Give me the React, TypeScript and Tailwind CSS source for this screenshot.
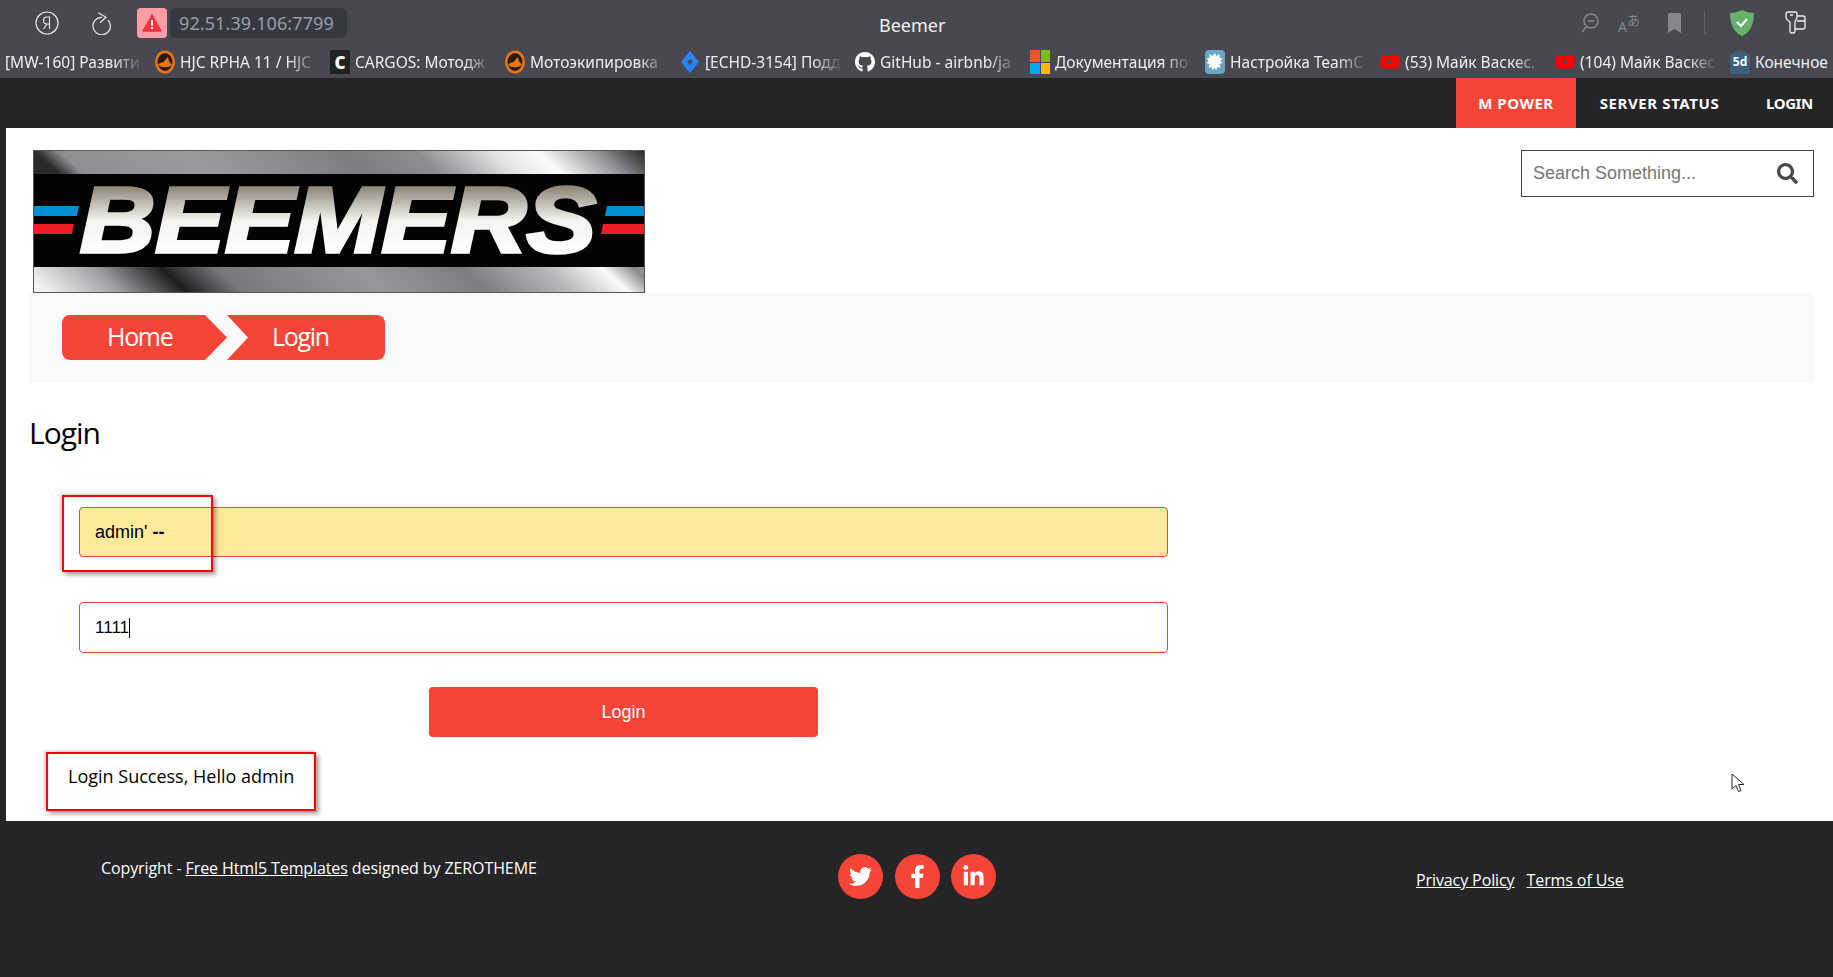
import React from 'react';
import { FaFacebookF, FaGithub, FaLinkedinIn, FaSearch, FaTwitter, FaYoutube } from 'react-icons/fa';

const chromeFont = { fontFamily: '"Noto Sans", sans-serif' };

const Moto = () => (
  <svg width="20" height="24" viewBox="0 0 20 24">
    <ellipse cx="10" cy="12" rx="10" ry="11.500" fill="#e8750f" />
    <ellipse cx="10" cy="12" rx="7.500" ry="9" fill="#2b1a0c" />
    <path d="M3 15c3-4 5-1 7-5l3-3 1 4 3 4c-4 3-10 3-14 0z" fill="#e8750f" />
  </svg>
);

const Cargos = () => (
  <div className="w-5 h-6 bg-[#222] flex items-center justify-center text-white font-black text-[17px] leading-none">C</div>
);

const Jira = () => (
  <svg width="20" height="24" viewBox="0 0 20 24">
    <path d="M10 1l9 11-9 11-9-11z" fill="#2684ff" />
    <path d="M10 9l3 3-3 3-3-3z" fill="#484851" />
  </svg>
);

const Windows = () => (
  <div className="w-5 h-6 grid grid-cols-2 gap-[1px]">
    <div className="bg-[#f35325]" />
    <div className="bg-[#81bc06]" />
    <div className="bg-[#05a6f0]" />
    <div className="bg-[#ffba08]" />
  </div>
);

const TeamCity = () => (
  <div className="w-5 h-6 rounded-sm bg-[#6aa5c5] flex items-center justify-center">
    <svg width="16" height="18" viewBox="0 0 16 18">
      <path d="M8 0l1.500 3 3-2 0 4 3 0-2 3 2 2-3 1 1 4-3-1-1 3-2-2-2 2-1-3-3 1 1-4-3-1 2-2-2-3 3 0 0-4 3 2z" fill="#fff" />
    </svg>
  </div>
);

const Yt = () => <FaYoutube size={22} className="text-[#f00]" />;

const FiveD = () => (
  <div className="w-5 h-6 bg-[#3b5f7d] flex items-center justify-center text-white text-[12px] font-bold leading-none [clip-path:polygon(50%_0,100%_20%,100%_100%,0_100%,0_20%)]">5d</div>
);

const bookmarks: { icon: React.ReactNode; label: string }[] = [
  { icon: <Moto />, label: 'HJC RPHA 11 / HJC' },
  { icon: <Cargos />, label: 'CARGOS: Мотодж' },
  { icon: <Moto />, label: 'Мотоэкипировка' },
  { icon: <Jira />, label: '[ECHD-3154] Подд' },
  { icon: <FaGithub size={22} className="text-white" />, label: 'GitHub - airbnb/ja' },
  { icon: <Windows />, label: 'Документация по' },
  { icon: <TeamCity />, label: 'Настройка TeamC' },
  { icon: <Yt />, label: '(53) Майк Васкес.' },
  { icon: <Yt />, label: '(104) Майк Васкес' },
  { icon: <FiveD />, label: 'Конечное' },
];

const Fade = ({ children }: { children: React.ReactNode }) => (
  <div className="w-[135px] overflow-hidden [mask-image:linear-gradient(to_right,#000_80%,transparent_102%)]">{children}</div>
);

const BrowserChrome = () => (
  <div className="h-[78px] bg-[#484851] text-white overflow-hidden" style={chromeFont}>
    <div className="h-[46px] flex items-center relative">
      <div className="w-[35px] shrink-0" />
      <svg width="24" height="24" viewBox="0 0 24 24" fill="none" stroke="#e8e8ea" strokeWidth="1.200">
        <circle cx="12" cy="12" r="11" />
        <path d="M14.500 18V6h-2.500a3.300 3.300 0 0 0 0 7h2.500M12 13l-3.500 5" />
      </svg>
      <svg className="ml-[33px]" width="20" height="24" viewBox="0 0 20 24" fill="none" stroke="#e8e8ea" strokeWidth="1.200">
        <path d="M10 6.300A8.700 8.700 0 1 0 16 9M6.300 1.700L14 6.300 8 11.700" />
      </svg>
      <div className="ml-[25px] w-[30px] h-[30px] rounded bg-[#ff9fa5] flex items-center justify-center">
        <svg width="20" height="18" viewBox="0 0 20 18">
          <path d="M10 1L19 17H1z" fill="#ee3340" stroke="#ee3340" strokeWidth="1.500" strokeLinejoin="round" />
          <path d="M10 6v5.500M10 13v2" stroke="#fff" strokeWidth="2" />
        </svg>
      </div>
      <div className="ml-[3px] w-[177px] h-[30px] rounded-md bg-[#363842] pl-[9px] text-[18px] tracking-[0.1px] leading-[30px] text-[#9b9ca4]">92.51.39.106:7799</div>
      <div className="absolute left-[879px] top-[13px] text-[18px] leading-[24px] text-[#f2f2f3]">Beemer</div>
      <div className="ml-auto flex items-center mr-[27px]">
        <svg width="20" height="22" viewBox="0 0 20 22" fill="none" stroke="#85868e" strokeWidth="1.500">
          <circle cx="11" cy="9" r="7" />
          <path d="M8 9h6M6 15l-4 5" />
        </svg>
        <svg className="ml-[18px]" width="24" height="24" viewBox="0 0 24 24" fill="#85868e">
          <text x="0" y="21" fontSize="14" fontFamily='"Noto Sans", sans-serif'>A</text>
          <text x="9" y="14" fontSize="13" fontFamily='"Noto Sans CJK JP", sans-serif'>あ</text>
        </svg>
        <svg className="ml-[25px]" width="15" height="22" viewBox="0 0 15 22">
          <path d="M1 2.500Q1 1 2.500 1h10Q14 1 14 2.500V21l-6.500-4L1 21z" fill="#85868e" />
        </svg>
        <div className="ml-[22px] w-px h-[22px] bg-[#5f6068]" />
        <svg className="ml-[24px]" width="26" height="28" viewBox="0 0 26 28">
          <path d="M13 1c4 2 8 3 12 3 0 10-3 19-12 23C4 23 1 14 1 4c4 0 8-1 12-3z" fill="#68b06c" />
          <path d="M8 13l4 4 6-7" fill="none" stroke="#fff" strokeWidth="2.200" />
        </svg>
        <svg className="ml-[29px]" width="22" height="26" viewBox="0 0 22 26" fill="none" stroke="#f0f0f2" strokeWidth="1.300">
          <path d="M4 2h7q2 0 2 2v3q0 2-1.500 3.500L11 12v9q0 2-2 2H8q-2 0-2-2v-9L4 10.500Q2 9 2 7V4q0-2 2-2zM6 5h3" />
          <path d="M13 6h6q2 0 2 2v9q0 2-2 2H11M13 11h8" />
        </svg>
      </div>
    </div>
    <div className="h-8 flex items-center pl-[5px] text-[15.500px] leading-[32px] text-[#eeeef0]">
      <div className="w-[150px] shrink-0 whitespace-nowrap">
        <Fade>[MW-160] Развити</Fade>
      </div>
      {bookmarks.map((item) => (
        <div key={item.label} className="w-[175px] shrink-0 flex items-center gap-[5px] whitespace-nowrap">
          <div className="w-5 shrink-0 flex justify-center">{item.icon}</div>
          {item.label === 'Конечное' ? <div>{item.label}</div> : <Fade>{item.label}</Fade>}
        </div>
      ))}
    </div>
  </div>
);

const TopNav = () => (
  <nav className="h-[50px] bg-[#252527] flex justify-end text-white text-[15px] font-bold" style={chromeFont}>
    <a className="w-[120px] flex items-center justify-center bg-[#f64436] tracking-[0.5px]">M POWER</a>
    <a className="w-[167px] flex items-center justify-center tracking-[0.6px]">SERVER STATUS</a>
    <a className="w-[90px] flex items-center pl-[23px] tracking-[-0.4px]">LOGIN</a>
  </nav>
);

const Logo = () => (
  <svg width="612" height="143" viewBox="0 0 612 143" className="block">
    <defs>
      <linearGradient id="bandTop" gradientUnits="userSpaceOnUse" x1="0" y1="0" x2="277" y2="-305">
        <stop offset="0" stopColor="#2a2a2c" />
        <stop offset="0.04" stopColor="#8e8f93" />
        <stop offset="0.25" stopColor="#9a9b9f" />
        <stop offset="0.5" stopColor="#7c7d81" />
        <stop offset="0.62" stopColor="#8c8d91" />
        <stop offset="0.75" stopColor="#e4e5e6" />
        <stop offset="0.82" stopColor="#fbfbfb" />
        <stop offset="0.92" stopColor="#8f9094" />
        <stop offset="1" stopColor="#222" />
      </linearGradient>
      <linearGradient id="bandBottom" gradientUnits="userSpaceOnUse" x1="0" y1="130" x2="277" y2="-175">
        <stop offset="0" stopColor="#f2f2f2" />
        <stop offset="0.12" stopColor="#a0a1a4" />
        <stop offset="0.23" stopColor="#1e1e20" />
        <stop offset="0.32" stopColor="#77787c" />
        <stop offset="0.55" stopColor="#96979b" />
        <stop offset="0.72" stopColor="#7c7d81" />
        <stop offset="0.86" stopColor="#b9babc" />
        <stop offset="0.95" stopColor="#fbfbfb" />
        <stop offset="1" stopColor="#8c8d90" />
      </linearGradient>
      <linearGradient id="letters" gradientUnits="userSpaceOnUse" x1="0" y1="37" x2="0" y2="104">
        <stop offset="0" stopColor="#8f8777" />
        <stop offset="0.5" stopColor="#f4f3f0" />
        <stop offset="1" stopColor="#ffffff" />
      </linearGradient>
    </defs>
    <rect width="612" height="143" fill="#020404" />
    <rect x="0" y="0" width="612" height="24" fill="url(#bandTop)" />
    <rect x="0" y="117" width="612" height="26" fill="url(#bandBottom)" />
    <path d="M0 56h46l-2 10H0zM572 66l2-10h38v10z" fill="#0090d8" />
    <path d="M0 74h41l-2 10H0zM568 84l2-10h42v10z" fill="#ee1c25" />
    <text x="47" y="102" fontFamily='"Liberation Sans", sans-serif' fontWeight="700" fontStyle="italic" fontSize="92" textLength="516" lengthAdjust="spacingAndGlyphs" fill="url(#letters)" stroke="url(#letters)" strokeWidth="3.500">BEEMERS</text>
    <rect x="0.500" y="0.500" width="611" height="142" fill="none" stroke="#55565a" />
  </svg>
);

const Footer = () => (
  <footer className="h-[156px] bg-[#252527] text-white text-[16px]" style={{ fontFamily: '"Open Sans", sans-serif' }}>
    <div className="flex pl-[101px] pt-[33px]">
      <div className="w-[737px] leading-[28px] whitespace-nowrap tracking-[-0.1px]">
        Copyright - <a className="underline">Free Html5 Templates</a> designed by ZEROTHEME
      </div>
      <div className="flex gap-[11.500px]">
        {[FaTwitter, FaFacebookF, FaLinkedinIn].map((Icon, i) => (
          <a key={i} className="w-[45px] h-[45px] rounded-full bg-[#f64436] flex items-center justify-center">
            <Icon size={23} />
          </a>
        ))}
      </div>
      <div className="ml-[420px] flex gap-[12px] pt-[12px] leading-[28px] tracking-[-0.1px]">
        <a className="underline">Privacy Policy</a>
        <a className="underline">Terms of Use</a>
      </div>
    </div>
  </footer>
);

export default function App() {
  return (
    <div className="w-[1833px] h-[977px] overflow-hidden bg-white relative">
      <BrowserChrome />
      <TopNav />
      <main className="h-[693px] border-l-[6px] border-[#252527] bg-white relative" style={{ fontFamily: '"Open Sans", sans-serif' }}>
        <div className="flex justify-between items-start pt-[22px] pl-[27px] pr-[19px]">
          <Logo />
          <div className="w-[293px] h-[47px] border border-[#444] flex items-center pl-[11px] pr-[15px]">
            <span className="flex-1 text-[18px] text-[#757575]" style={{ fontFamily: '"Liberation Sans", sans-serif' }}>Search Something...</span>
            <FaSearch size={21} className="text-[#4a4a4a]" />
          </div>
        </div>

        <div className="ml-[23px] mr-[19px] h-[90px] bg-[#f9f9f9] pt-[22px] pl-[33px] flex text-white text-[25px] tracking-[-1.300px]">
          <a className="w-[165px] h-[45px] bg-[#f64436] rounded-l-lg flex items-center pl-[45px] pb-[2px] [clip-path:polygon(0_0,143px_0,165px_50%,143px_100%,0_100%)]">Home</a>
          <a className="w-[158px] h-[45px] bg-[#f64436] rounded-r-lg flex items-center pl-[45px] pb-[2px] [clip-path:polygon(0_0,100%_0,100%_100%,0_100%,21px_50%)]">Login</a>
        </div>

        <h2 className="ml-[23px] mt-[27px] text-[30px] leading-[46px] text-black tracking-[-1px]">Login</h2>

        <form className="ml-[73px] mt-[51px] w-[1089px] flex flex-col" style={{ fontFamily: '"Liberation Sans", sans-serif' }} onSubmit={(e) => e.preventDefault()}>
          <div className="h-[50px] rounded border border-[#f64436] bg-[#ffe99a] pl-[15px] flex items-center text-[18px] text-black">
            admin'&nbsp;<span className="font-bold">--</span>
          </div>
          <div className="mt-[45px] h-[51px] rounded border border-[#f64436] bg-white pl-[15px] flex items-center text-[17px] text-black">
            1111<span className="w-px h-5 bg-black" />
          </div>
          <button className="mt-[34px] ml-[350px] w-[389px] h-[50px] rounded bg-[#f64436] text-white text-[18px]">Login</button>
        </form>

        <p className="ml-[62px] mt-[26px] text-[18px] leading-[26px] text-black">Login Success, Hello admin</p>

        {/* annotation boxes drawn over the screenshot */}
        <div className="absolute left-[56px] top-[367px] w-[151px] h-[77px] border-2 border-[#f00] shadow-[3px_3px_4px_rgba(0,0,0,0.35),-2px_-1px_3px_rgba(0,0,0,0.2)]" />
        <div className="absolute left-[40px] top-[624px] w-[270px] h-[59px] border-2 border-[#f00] shadow-[3px_3px_4px_rgba(0,0,0,0.35),-2px_-1px_3px_rgba(0,0,0,0.2)]" />
        <svg className="absolute left-[1725px] top-[645px]" width="14" height="21" viewBox="0 0 14 21">
          <path d="M1 1v15l4-3.500 2.500 6 2.500-1-2.500-6H13z" fill="#fff" stroke="#222" strokeWidth="1" />
        </svg>
      </main>
      <Footer />
    </div>
  );
}
